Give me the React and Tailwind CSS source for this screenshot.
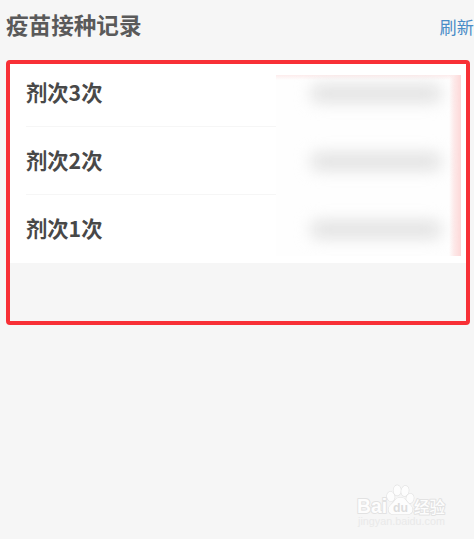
import React from 'react';

const records = [
  { id: 3, label: '剂次3次' },
  { id: 2, label: '剂次2次' },
  { id: 1, label: '剂次1次' },
];

const Header = () => (
  <header className="flex h-[60px] items-start justify-between pl-[6px]">
    <h1 className="mt-2 text-[22.6px] leading-[34px] font-bold text-[#5a5a5a]">疫苗接种记录</h1>
    <button className="mt-[14px] text-[17.2px] leading-[26px] whitespace-nowrap text-[#4a8cc7]">刷新</button>
  </header>
);

const RecordRow = ({ label, last }) => (
  <li className={last ? 'h-[68px]' : 'h-[68px] border-b border-[#f6f6f6]'}>
    <div className="flex h-[66px] items-center text-[21.3px] leading-[32px] font-bold text-[#484848]">{label}</div>
  </li>
);

// Dates are hidden behind a frosted panel
const HiddenDates = () => (
  <div className="relative mt-[11px] flex h-[181px] w-[185px] flex-col overflow-hidden bg-[#fefefe]">
    <div className="absolute inset-x-0 top-0 h-[5px] bg-linear-to-b from-[#fdecec] to-transparent" />
    <div className="absolute inset-y-0 right-0 w-[12px] bg-linear-to-r from-transparent via-[#fdeaea] via-40% to-[#fdd8d8]" />
    {records.map((record) => (
      <div key={record.id} className="flex h-[68px] shrink-0 items-start pt-[10px] pl-[35px]">
        <div className="h-[17px] w-[130px] rounded-md bg-[#e0e0e0] blur-[8px]" />
      </div>
    ))}
  </div>
);

const Watermark = () => (
  <div className="absolute top-[482px] left-[356px] h-[50px] w-[92px]">
    <svg
      width="92"
      height="50"
      viewBox="0 0 92 50"
      fill="#fdfdfd"
      stroke="#e2e2e2"
      strokeWidth="1.2"
      strokeLinejoin="round"
      paintOrder="stroke"
      fontFamily='"Liberation Sans", "Noto Sans CJK SC", sans-serif'
    >
      <text x="1" y="31" fontSize="20" fontWeight="700" strokeWidth="2" textLength="30" lengthAdjust="spacingAndGlyphs">Bai</text>
      <ellipse cx="34.8" cy="14.5" rx="3.8" ry="4.8" transform="rotate(-12 34.8 14.5)" />
      <ellipse cx="41.2" cy="8.4" rx="3.7" ry="5.2" />
      <ellipse cx="49" cy="9" rx="3.7" ry="5.200" transform="rotate(10 49 9)" />
      <ellipse cx="54" cy="16.500" rx="3.700" ry="4.800" transform="rotate(14 54 16.500)" />
      <path d="M44.500 15.500c-4.300 0-5.200 3-7.400 5.200s-4.600 3.800-4.600 6.800c0 3 2 4.700 5 4.700h14c3 0 5-1.700 5-4.700s-2.400-4.600-4.600-6.800-3.100-5.200-7.400-5.200z" />
      <text x="37" y="29.500" fontSize="13" fontWeight="700" fill="#dddddd" stroke="none" textLength="15" lengthAdjust="spacingAndGlyphs">du</text>
      <text x="58" y="30.500" fontSize="15.500" fontWeight="500" strokeWidth="2">经验</text>
      <text x="2" y="43" fontSize="10" fill="#e9e9e9" stroke="none" textLength="87" lengthAdjust="spacingAndGlyphs">jingyan.baidu.com</text>
    </svg>
  </div>
);

const App = () => {
  return (
    <main className="relative h-[539px] w-[474px] overflow-hidden bg-[#f6f6f6] font-['Noto_Sans_CJK_SC',sans-serif]">
      <Header />
      <section className="ml-[6px] h-[265px] w-[464px] rounded-[4px] border-4 border-[#f83036]">
        <div className="flex h-[199px] justify-between bg-white pr-[5px] pl-[16px]">
          <ul className="-mt-[5px] w-[250px]">
            {records.map((record, index) => (
              <RecordRow key={record.id} label={record.label} last={index === records.length - 1} />
            ))}
          </ul>
          <HiddenDates />
        </div>
      </section>
      <Watermark />
    </main>
  );
};

export default App;
